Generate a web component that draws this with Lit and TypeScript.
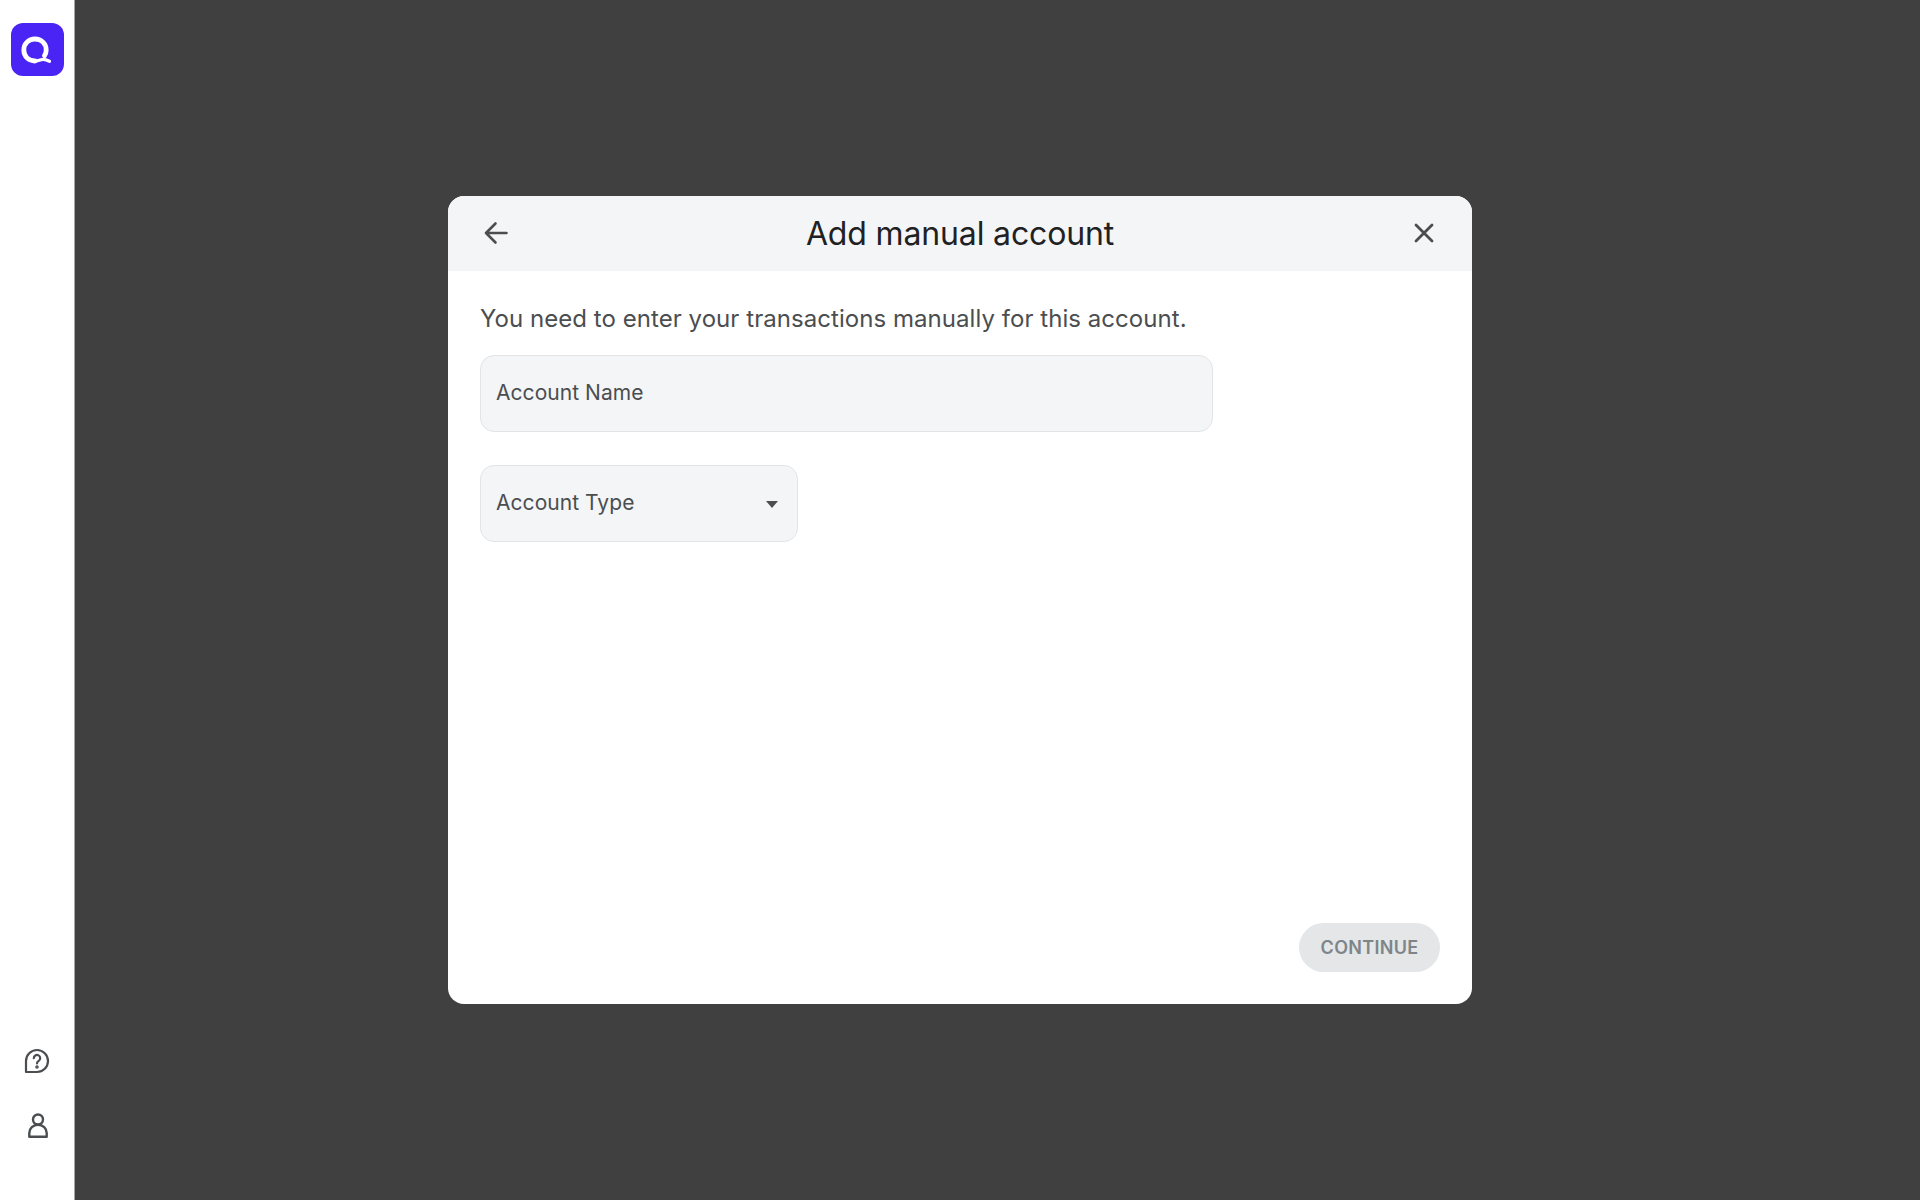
import { LitElement, css, html } from "lit";
import { customElement } from "lit/decorators.js";

@customElement("app-root")
export class AppRoot extends LitElement {
  render() {
    return html`
      <nav class="rail">
        <div class="logo">
          <svg width="53" height="53" viewBox="0 0 53 53">
            <rect width="53" height="53" rx="12" fill="#4a24f5"></rect>
            <path
              d="M24 38c-6.400 0-11.200-4.700-11.200-11s4.800-11 11.200-11 11.200 4.700 11.200 11c0 2.200-.6 4.100-1.700 5.700"
              fill="none"
              stroke="#fff"
              stroke-width="4.800"
              stroke-linecap="round"
            ></path>
            <path
              d="M24 38c3.200 0 5.400-1.600 8.200-1.600 2 0 3.600.6 6.300 1.900"
              fill="none"
              stroke="#fff"
              stroke-width="3.200"
              stroke-linecap="round"
            ></path>
          </svg>
        </div>
        <div class="rail-bottom">
          <svg width="26" height="26" viewBox="0 0 26 26" fill="none" stroke="#4b4e50" stroke-width="2.200">
            <path d="M2 24V13a11 11 0 1 1 11 11z" stroke-linejoin="round"></path>
            <path d="M9.800 10.200a3.200 3.200 0 1 1 4.900 2.700c-1.100.7-1.700 1.200-1.700 2.500" stroke-linecap="round"></path>
            <circle cx="13" cy="19" r=".7" fill="#4b4e50"></circle>
          </svg>
          <svg width="22" height="25" viewBox="-2 0 22 25" fill="none" stroke="#4b4e50" stroke-width="2.400">
            <circle cx="10" cy="6.500" r="5"></circle>
            <path d="M1.300 23.700V20a8.700 8.200 0 0 1 17.400 0v3.700z" stroke-linejoin="round"></path>
          </svg>
        </div>
      </nav>
      <main class="backdrop">
        <section class="modal">
          <header class="modal-head">
            <svg width="26" height="26" viewBox="0 0 26 26" fill="none" stroke="#4b4e50" stroke-width="2.600" stroke-linecap="round" stroke-linejoin="round">
              <path d="M23.500 13H3M12.500 3.500 3 13l9.500 9.500"></path>
            </svg>
            <h1>Add manual account</h1>
            <svg width="26" height="26" viewBox="0 0 26 26" fill="none" stroke="#4b4e50" stroke-width="2.800" stroke-linecap="round">
              <path d="M5 5l16 16M21 5 5 21"></path>
            </svg>
          </header>
          <div class="modal-body">
            <p class="intro">You need to enter your transactions manually for this account.</p>
            <div class="field name">Account Name</div>
            <div class="field type">
              <span>Account Type</span>
              <span class="caret"></span>
            </div>
          </div>
          <footer class="modal-foot">
            <button class="continue" disabled>CONTINUE</button>
          </footer>
        </section>
      </main>
    `;
  }

  static styles = css`
    :host {
      display: flex;
      height: 1200px;
      font-family: Inter, "Noto Sans", sans-serif;
      color: #4b4e50;
    }

    .rail {
      width: 75px;
      flex: none;
      box-sizing: border-box;
      border-right: 1px solid #a6a6a6;
      background: #fff;
      display: flex;
      flex-direction: column;
      align-items: center;
      justify-content: space-between;
      padding: 23px 0 62px;
    }

    .logo {
      height: 53px;
    }

    .rail-bottom {
      display: flex;
      flex-direction: column;
      align-items: center;
      gap: 39px;
    }

    .backdrop {
      flex: 1;
      background: #404040;
      display: flex;
      align-items: center;
      justify-content: center;
      padding-right: 75px;
    }

    .modal {
      width: 1024px;
      height: 808px;
      background: #fff;
      border-radius: 16px;
      overflow: hidden;
      display: flex;
      flex-direction: column;
    }

    .modal-head {
      box-sizing: border-box;
      height: 75px;
      flex: none;
      background: #f3f5f6;
      display: flex;
      align-items: center;
      justify-content: space-between;
      padding: 0 35px 1px 35px;
    }

    h1 {
      margin: 0;
      font-size: 32px;
      font-weight: 400;
      color: #1f2123;
      letter-spacing: -0.15px;
    }

    .modal-body {
      flex: 1;
      padding: 33px 32px 0;
    }

    .intro {
      margin: 0 0 21px;
      font-size: 24px;
      line-height: 30px;
      letter-spacing: 0.05px;
    }

    .field {
      box-sizing: border-box;
      height: 77px;
      background: #f3f5f6;
      border: 1px solid #e2e4e6;
      border-radius: 14px;
      padding: 0 15px 3px;
      display: flex;
      align-items: center;
      font-size: 21px;
      letter-spacing: 0.05px;
    }

    .name {
      width: 733px;
      margin-bottom: 33px;
    }

    .type {
      width: 318px;
      justify-content: space-between;
    }

    .caret {
      width: 0;
      height: 0;
      margin: 5px 4px 0 0;
      border-left: 6px solid transparent;
      border-right: 6px solid transparent;
      border-top: 7px solid #4b4e50;
    }

    .modal-foot {
      display: flex;
      justify-content: flex-end;
      padding: 0 32px 32px;
    }

    .continue {
      width: 141px;
      height: 49px;
      border: none;
      border-radius: 25px;
      background: #e4e6e8;
      color: #7e8589;
      font: 600 18px Inter, "Noto Sans", sans-serif;
      letter-spacing: 0.3px;
    }
  `;
}
